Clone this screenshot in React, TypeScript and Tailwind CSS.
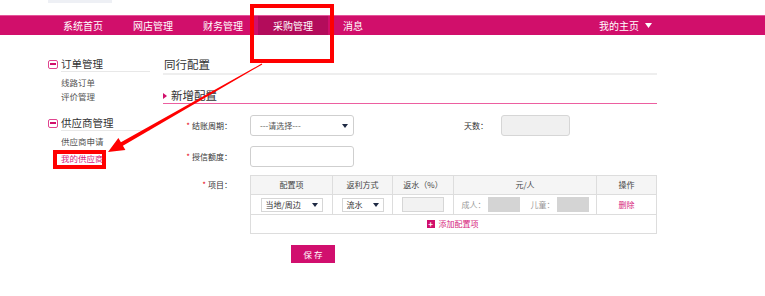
import React from 'react';

const navItems = ['系统首页', '网店管理', '财务管理', '采购管理', '消息'];

function Caret() {
  return (
    <svg width="6" height="4" viewBox="0 0 6 4" className="shrink-0">
      <path d="M0 0h6L3 4z" fill="#1f2a44" />
    </svg>
  );
}

function MinusBox() {
  return (
    <span className="flex h-[9px] w-[10px] shrink-0 items-center justify-center rounded-[2px] border border-[#e0448f] bg-white">
      <span className="h-[1.5px] w-[6px] bg-[#d10f6b]" />
    </span>
  );
}

function Label({ text }: { text: string }) {
  return (
    <div className="flex w-[69px] shrink-0 items-center justify-end text-[8px] text-[#333]">
      <span className="mr-[2px] text-[8px] text-[#e60012]">*</span>
      {text}：
    </div>
  );
}

export default function App() {
  return (
    <div className="relative h-[296px] w-[765px] overflow-hidden bg-white font-['Noto_Sans_CJK_SC',sans-serif]">
      {/* top strip */}
      <div className="h-[15px]">
        <div className="ml-[48px] h-[3px] w-[64px] bg-[#eef0f5]" />
      </div>

      {/* nav */}
      <div className="flex h-[20px] items-stretch border-t border-[#e4559a] bg-[#d10f6b] pl-[48px] text-[10px] text-white">
        {navItems.map((item) => (
          <div
            key={item}
            className={`flex items-center px-[15px] ${item === '采购管理' ? 'bg-[#b30c5b]' : ''}`}
          >
            {item}
          </div>
        ))}
        <div className="ml-auto flex items-center gap-[6px] pr-[113px]">
          <span>我的主页</span>
          <svg width="7" height="5" viewBox="0 0 7 5">
            <path d="M0 0h7L3.5 5z" fill="#fff" />
          </svg>
        </div>
      </div>

      <div className="flex">
        {/* sidebar */}
        <div className="ml-[48px] w-[102px] shrink-0">
          <div className="mt-[21px] flex h-[16px] items-center gap-[3px]">
            <MinusBox />
            <div className="flex h-full flex-1 items-center border-b border-[#e8e8e8] text-[10.5px] text-[#333]">
              订单管理
            </div>
          </div>
          <div className="mt-[3px] pl-[13px] text-[8.5px] leading-[14px] text-[#555]">
            <div>线路订单</div>
            <div>评价管理</div>
          </div>
          <div className="mt-[12px] flex h-[16px] items-center gap-[3px]">
            <MinusBox />
            <div className="flex h-full flex-1 items-center border-b border-[#e8e8e8] text-[10.5px] text-[#333]">
              供应商管理
            </div>
          </div>
          <div className="mt-[3px] pl-[13px] text-[8.5px] leading-[14px]">
            <div className="text-[#555]">供应商申请</div>
            <div className="mt-[3px] text-[#d6247c]">我的供应商</div>
          </div>
        </div>

        {/* content */}
        <div className="ml-[13px] w-[494px]">
          <div className="mt-[21px] flex h-[19px] items-center border-b-2 border-[#eeeeee] pl-[1px] text-[11.5px] text-[#333]">
            同行配置
          </div>
          <div className="mt-[13px] flex h-[15px] items-center gap-[4px] text-[11.5px] text-[#333]">
            <svg width="4" height="6" viewBox="0 0 4 6">
              <path d="M0 0l4 3-4 3z" fill="#d10f6b" />
            </svg>
            新增配置
          </div>
          <div className="h-px bg-[#ec5fa0]" />

          {/* row 1 */}
          <div className="mt-[11px] flex h-[21px] items-center">
            <Label text="结账周期" />
            <div className="ml-[18px] flex h-[21px] w-[104px] items-center justify-between rounded-[3px] border border-[#cfcfcf] px-[9px] pr-[5px] text-[8px] text-[#555]">
              <span>---请选择---</span>
              <Caret />
            </div>
            <div className="ml-[110px] w-[37px] text-[8px] text-[#333]">天数：</div>
            <div className="h-[21px] w-[69px] rounded-[3px] border border-[#d6d6d6] bg-[#f0f0f0]" />
          </div>

          {/* row 2 */}
          <div className="mt-[10px] flex h-[21px] items-center">
            <Label text="授信额度" />
            <div className="ml-[18px] h-[21px] w-[104px] rounded-[3px] border border-[#cfcfcf]" />
          </div>

          {/* row 3 */}
          <div className="mt-[8px] flex">
            <div className="flex h-[19px] items-center">
              <Label text="项目" />
            </div>
            <div className="ml-[18px] w-[407px] border border-[#dddddd] text-[8px] text-[#444]">
              <div className="flex h-[18px] bg-[#f5f5f5]">
                <div className="flex w-[82px] items-center justify-center border-r border-[#dddddd]">配置项</div>
                <div className="flex w-[60px] items-center justify-center border-r border-[#dddddd]">返利方式</div>
                <div className="flex w-[61px] items-center justify-center border-r border-[#dddddd]">返水（%）</div>
                <div className="flex w-[143px] items-center justify-center border-r border-[#dddddd]">元/人</div>
                <div className="flex flex-1 items-center justify-center">操作</div>
              </div>
              <div className="flex h-[20px] border-t border-[#dddddd]">
                <div className="flex w-[82px] items-center justify-center border-r border-[#dddddd]">
                  <div className="flex h-[14px] w-[62px] items-center justify-between border border-[#d6d6d6] px-[4px] text-[#333]">
                    <span>当地/周边</span>
                    <Caret />
                  </div>
                </div>
                <div className="flex w-[60px] items-center justify-center border-r border-[#dddddd]">
                  <div className="flex h-[14px] w-[42px] items-center justify-between border border-[#d6d6d6] px-[4px] text-[#333]">
                    <span>流水</span>
                    <Caret />
                  </div>
                </div>
                <div className="flex w-[61px] items-center justify-center border-r border-[#dddddd]">
                  <div className="h-[15px] w-[42px] border border-[#d6d6d6] bg-[#f2f2f2]" />
                </div>
                <div className="flex w-[143px] items-center justify-center gap-[2px] border-r border-[#dddddd] text-[#999]">
                  <span>成人：</span>
                  <div className="h-[15px] w-[32px] bg-[#d4d4d4]" />
                  <span className="ml-[9px]">儿童：</span>
                  <div className="h-[15px] w-[32px] bg-[#d4d4d4]" />
                </div>
                <div className="flex flex-1 items-center justify-center text-[#d6247c]">删除</div>
              </div>
              <div className="flex h-[19px] items-center justify-center gap-[4px] border-t border-[#dddddd] pr-[2px] text-[#d6247c]">
                <span className="flex h-[8px] w-[8px] items-center justify-center bg-[#d10f6b] text-[8px] leading-none font-bold text-white">+</span>
                <span>添加配置项</span>
              </div>
            </div>
          </div>

          <button className="ml-[128px] mt-[11px] flex h-[18px] w-[44px] items-center justify-center bg-[#d10f6e] text-[8.5px] text-white">
            保 存
          </button>
        </div>
      </div>

      {/* annotations */}
      <svg className="pointer-events-none absolute left-0 top-0" width="765" height="296" viewBox="0 0 765 296">
        <rect x="252" y="6" width="80" height="55" fill="none" stroke="#ff0000" strokeWidth="4" />
        <rect x="55" y="152" width="49" height="15" fill="none" stroke="#ff0000" strokeWidth="4" />
        <polygon
          points="262.3,64.4 261.7,63.6 120.9,142.3 118.4,137.9 108,152 125.4,150.1 122.9,145.7"
          fill="#ff0000"
        />
      </svg>
    </div>
  );
}
